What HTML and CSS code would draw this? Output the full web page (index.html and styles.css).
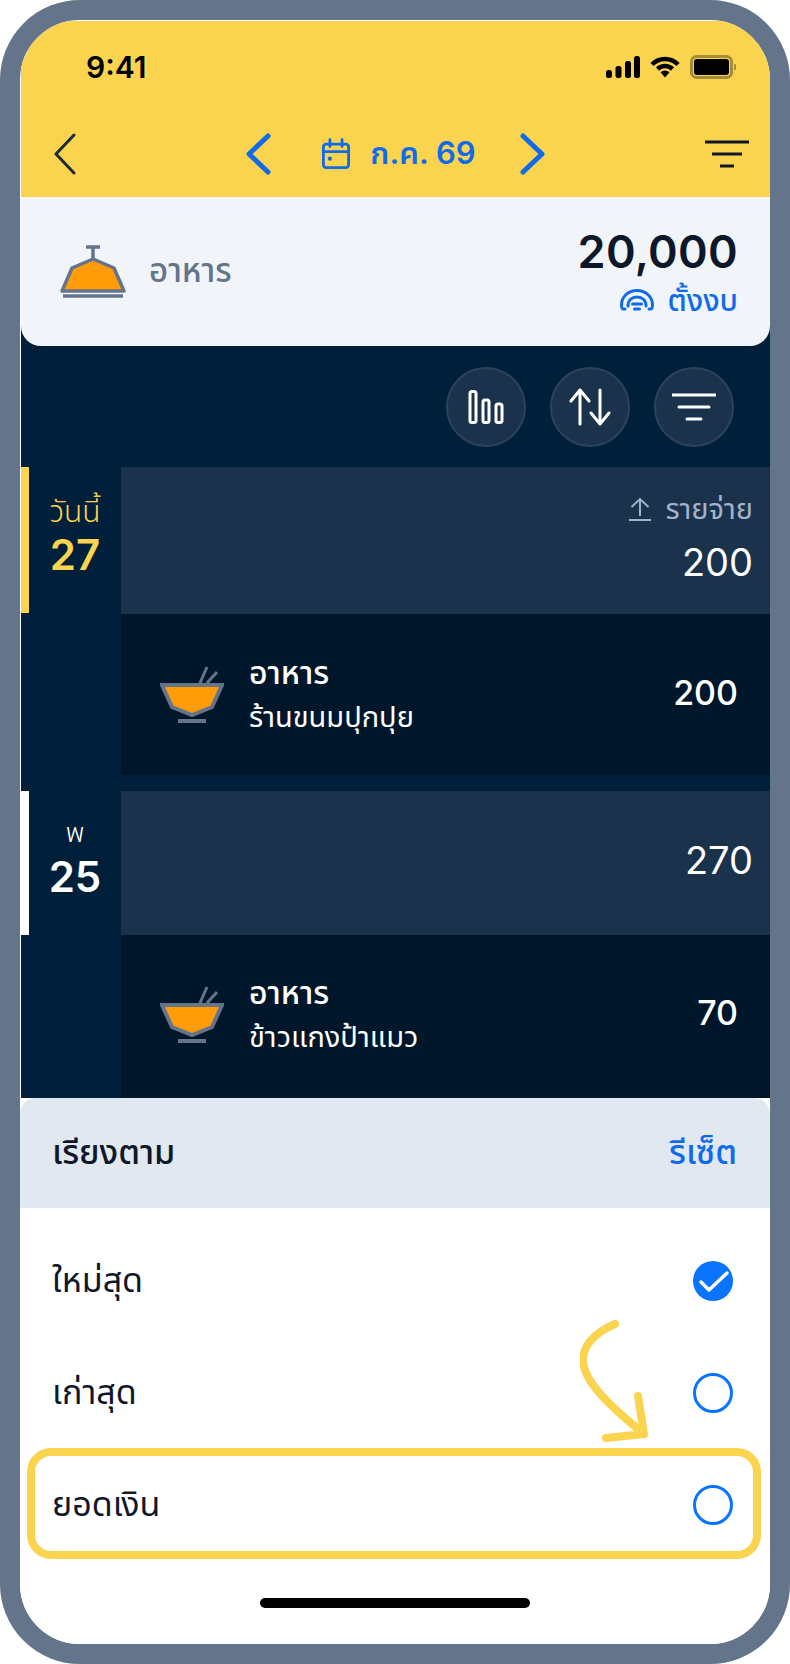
FILE: index.html
```html
<!DOCTYPE html>
<html lang="th">
<head>
    <meta charset="UTF-8">
    <meta name="viewport" content="width=device-width, initial-scale=1.0">
    <title>อาหาร - เรียงตาม</title>
    <link rel="stylesheet" href="styles.css">
</head>
<body>

    <div class="phone">
        <div class="screen">

            <div class="top">
                <div class="status">
                    <span class="time">9:41</span>
                    <div class="status-icons">
                        <svg width="34" height="22" viewBox="0 0 34 22"><rect x="0" y="14" width="6" height="8" rx="2.5"/><rect x="9.500" y="10" width="6" height="12" rx="2.500"/><rect x="19" y="5" width="6" height="17" rx="2.500"/><rect x="28" y="0" width="6" height="22" rx="2.500"/></svg>
                        <svg width="30" height="22" viewBox="0 0 30 22"><path d="M2 8.500 A18 18 0 0 1 28 8.500" class="wifi"/><path d="M7.500 13 A11 11 0 0 1 22.500 13" class="wifi"/><path d="M10.500 16.200 A6.500 6.500 0 0 1 19.500 16.200 L15 21.500 Z"/></svg>
                        <svg width="46" height="24" viewBox="0 0 46 24"><rect x="1.500" y="1.500" width="40" height="21" rx="5" class="batt-rim"/><rect x="4" y="4" width="35" height="16" rx="3"/><path d="M44 9 a3 3 0 0 1 0 6 Z" class="batt-nub"/></svg>
                    </div>
                </div>
                <div class="nav">
                    <svg class="nav-back" width="22" height="42" viewBox="0 0 22 42"><path d="M20 2 L2 21 L20 40"/></svg>
                    <div class="month">
                        <svg class="chev" width="26" height="42" viewBox="0 0 26 42"><path d="M23 3 L4 21 L23 39"/></svg>
                        <svg class="cal" width="28" height="32" viewBox="0 0 30 34"><rect x="1.500" y="6.500" width="27" height="25" rx="3"/><path d="M1.500 14.500 H28.500 M8.500 1.500 V9 M21.500 1.500 V9"/><circle cx="8.500" cy="22" r="2.200" class="cal-dot"/></svg>
                        <span class="month-label">ก.ค. 69</span>
                        <svg class="chev" width="26" height="42" viewBox="0 0 26 42"><path d="M3 3 L22 21 L3 39"/></svg>
                    </div>
                    <svg class="filter filter-dark" width="44" height="28" viewBox="0 0 44 28"><path d="M0 2 H44 M7 14 H37 M15 26 H29"/></svg>
                </div>
            </div>

            <div class="content">
                <div class="summary">
                    <div class="summary-name">
                        <svg width="66" height="54" viewBox="0 0 66 54"><path d="M26 2 H40 M33 2 V14"/><path d="M33 14 L54 23 L64 46 H2 L12 23 Z" class="fill-orange"/><path d="M3 51 H63"/></svg>
                        <span>อาหาร</span>
                    </div>
                    <div class="summary-amount">
                        <div class="budget-total">20,000</div>
                        <div class="budget-link">
                            <svg width="34" height="22" viewBox="0 0 34 22"><path d="M5 20 H3.500 Q1.500 20 1.500 16 C1.500 8 8 1.500 17 1.500 C26 1.500 32.500 8 32.500 16 Q32.500 20 30.500 20 H29"/><path d="M8 17 C8 11 12 8 17 8 C22 8 26 11 26 17"/><path d="M12.500 15 H21.500 M14.500 20 H19.500"/></svg>
                            <span>ตั้งงบ</span>
                        </div>
                    </div>
                </div>

                <div class="tools">
                    <div class="tool">
                        <svg class="bars" width="36" height="34" viewBox="0 0 36 34"><rect x="2" y="1.500" width="6" height="31" rx="2"/><rect x="15" y="10" width="6" height="22.500" rx="2"/><rect x="28" y="14" width="6" height="18.500" rx="2"/></svg>
                    </div>
                    <div class="tool">
                        <svg width="42" height="38" viewBox="0 0 42 38"><path d="M11 36 V2 M2 13 L11 2 L20 13"/><path d="M31 2 V36 M22 25 L31 36 L40 25"/></svg>
                    </div>
                    <div class="tool">
                        <svg class="filter" width="44" height="28" viewBox="0 0 44 28"><path d="M0 2 H44 M7 14 H37 M15 26 H29"/></svg>
                    </div>
                </div>

                <div class="days">
                    <div class="day">
                        <div class="date date-today">
                            <div class="date-label">วันนี้</div>
                            <div class="date-num">27</div>
                        </div>
                        <div class="day-total day-total-tall">
                            <div class="total-kind">
                                <svg width="24" height="24" viewBox="0 0 24 24"><path d="M12 19 V2 M3.500 10 L12 2 L20.500 10 M1 23 H23"/></svg>
                                <span>รายจ่าย</span>
                            </div>
                            <div class="total-num">200</div>
                        </div>
                    </div>
                    <div class="entry entry-first">
                        <svg class="bowl" width="64" height="60" viewBox="0 0 64 60"><path d="M40 18 L47 2 M47 18 L57 7" class="sticks"/><path d="M2 20 H62 L52 42 L32 50 L12 42 Z" class="fill-orange"/><path d="M18 56 H46"/></svg>
                        <div class="entry-text">
                            <div class="entry-title">อาหาร</div>
                            <div class="entry-sub">ร้านขนมปุกปุย</div>
                        </div>
                        <div class="entry-num">200</div>
                    </div>

                    <div class="day">
                        <div class="date">
                            <div class="date-label">พ</div>
                            <div class="date-num">25</div>
                        </div>
                        <div class="day-total day-total-short">
                            <div class="total-num">270</div>
                        </div>
                    </div>
                    <div class="entry entry-last">
                        <svg class="bowl" width="64" height="60" viewBox="0 0 64 60"><path d="M40 18 L47 2 M47 18 L57 7" class="sticks"/><path d="M2 20 H62 L52 42 L32 50 L12 42 Z" class="fill-orange"/><path d="M18 56 H46"/></svg>
                        <div class="entry-text">
                            <div class="entry-title">อาหาร</div>
                            <div class="entry-sub">ข้าวแกงป้าแมว</div>
                        </div>
                        <div class="entry-num">70</div>
                    </div>
                </div>
            </div>

            <div class="sheet">
                <div class="sheet-head">
                    <span class="sheet-title">เรียงตาม</span>
                    <span class="sheet-reset">รีเซ็ต</span>
                </div>
                <div class="options">
                    <div class="option">
                        <span>ใหม่สุด</span>
                        <svg width="40" height="40" viewBox="0 0 40 40"><circle cx="20" cy="20" r="20" class="radio-on"/><path d="M8 21 L16 29 L34 12" class="radio-check"/></svg>
                    </div>
                    <div class="option">
                        <span>เก่าสุด</span>
                        <svg width="40" height="40" viewBox="0 0 40 40"><circle cx="20" cy="20" r="18.500" class="radio-off"/></svg>
                    </div>
                    <div class="option">
                        <span>ยอดเงิน</span>
                        <svg width="40" height="40" viewBox="0 0 40 40"><circle cx="20" cy="20" r="18.500" class="radio-off"/></svg>
                    </div>
                </div>
                <div class="home-bar"></div>
            </div>

            <div class="highlight"></div>
            <svg class="arrow" width="72" height="126" viewBox="0 0 72 126"><path d="M35 5 C14 14 3 27 3 41 C3 64 36 92 64 115 M58 77 L64 115 L26 119"/></svg>
        </div>
    </div>

</body>
</html>
```
FILE: styles.css
```css
* { box-sizing: border-box; }
body { margin: 0; background: white; font-family: Inter, "Noto Sans", "Noto Sans Thai", sans-serif; color: #0f172a; }
svg { display: block; flex: none; }

.phone { width: 790px; height: 1664px; border: 20px solid #64748b; border-radius: 80px; overflow: hidden; background: white; }
.screen { position: relative; height: 1624px; display: flex; flex-direction: column; padding: 1px 0 0 1px; }

/* yellow top */
.top { height: 176px; background: #fad34f; }
.status { display: flex; justify-content: space-between; align-items: center; height: 70px; padding: 22px 34px 0 65px; }
.time { font-size: 30px; font-weight: 600; color: black; }
.status-icons { display: flex; align-items: center; gap: 10px; }
.wifi { fill: none; stroke: black; stroke-width: 4.500; }
.batt-rim { fill: none; stroke: #a58d33; stroke-width: 3; }
.batt-nub { fill: #a58d33; }
.nav { display: flex; justify-content: space-between; align-items: center; height: 42px; margin-top: 42px; padding: 0 21px 0 33px; }
.nav-back path { fill: none; stroke: #1e293b; stroke-width: 3; stroke-linecap: round; stroke-linejoin: round; }
.month { display: flex; align-items: center; margin-left: 10px; }
.chev path { fill: none; stroke: #0f6bec; stroke-width: 5; stroke-linecap: round; stroke-linejoin: round; }
.cal { margin-left: 51px; }
.cal rect, .cal path { fill: none; stroke: #0f6bec; stroke-width: 3; stroke-linecap: round; }
.cal-dot { fill: #0f6bec; }
.month-label { margin: 0 44px 0 20px; font-size: 31px; font-weight: 600; color: #0f6bec; }
.filter path { fill: none; stroke: white; stroke-width: 3; }
.filter-dark path { stroke: #0f172a; }

/* dark content */
.content { flex: 1; min-height: 0; overflow: hidden; background: #001f3a; }
.summary { display: flex; justify-content: space-between; align-items: center; height: 149px; padding: 0 32px 0 39px; background: #f1f5f9; border-radius: 0 0 20px 20px; }
.summary-name { display: flex; align-items: center; gap: 23px; font-size: 33px; font-weight: 500; color: #64748b; }
.summary-name svg path { fill: none; stroke: #64748b; stroke-width: 3.500; stroke-linejoin: round; }
.summary-name svg path.fill-orange, .bowl path.fill-orange { fill: #ff9c08; }
.summary-amount { text-align: right; }
.budget-total { font-size: 45px; font-weight: 600; letter-spacing: 0.3px; line-height: 52px; color: #0f172a; }
.budget-link { display: flex; justify-content: flex-end; align-items: center; gap: 14px; margin-top: 4px; font-size: 30px; line-height: 36px; font-weight: 500; color: #0f6bec; }
.budget-link svg path { fill: none; stroke: #0f6bec; stroke-width: 3; stroke-linecap: round; }

.tools { display: flex; justify-content: flex-end; gap: 24px; height: 121px; padding: 21px 36px 0 0; }
.tool { display: flex; align-items: center; justify-content: center; width: 80px; height: 80px; border: 2px solid #2c435c; border-radius: 50%; background: #1a324c; }
.tool svg rect, .tool svg path { fill: none; stroke: white; stroke-width: 3; stroke-linecap: round; stroke-linejoin: round; }

.day { display: flex; }
.date { width: 100px; height: 144px; padding-top: 24px; border-left: 8px solid white; color: white; text-align: center; }
.date-today { height: 146px; padding-top: 26px; border-left-color: #fad34f; color: #fad34f; }
.date-label { font-size: 27px; line-height: 36px; font-weight: 300; }
.date-today .date-label { font-size: 30px; }
.date-num { font-size: 42px; line-height: 52px; font-weight: 600; }
.day-total { flex: 1; display: flex; flex-direction: column; justify-content: center; align-items: flex-end; padding-right: 17px; background: #1a324c; color: white; }
.day-total-tall { height: 147px; justify-content: flex-start; padding-top: 24px; }
.day-total-short { height: 144px; padding-bottom: 6px; }
.total-kind { display: flex; align-items: center; gap: 13px; font-size: 29px; line-height: 36px; color: #a3b3c9; }
.total-kind svg path { fill: none; stroke: #a3b3c9; stroke-width: 2; }
.total-num { margin-top: 13px; font-size: 38px; line-height: 44px; font-weight: 400; }
.day-total-short .total-num { margin-top: 0; }

.entry { display: flex; align-items: center; height: 163px; margin-left: 100px; padding: 0 32px 0 39px; background: #00162b; color: white; }
.entry-first { height: 161px; margin-bottom: 16px; }
.entry-last { padding-bottom: 4px; }
.bowl { margin-right: 25px; }
.bowl path { fill: none; stroke: #64748b; stroke-width: 4; }
.bowl path.sticks { stroke-width: 3; }
.entry-text { flex: 1; }
.entry-title { font-size: 32px; line-height: 40px; font-weight: 500; }
.entry-sub { margin-top: 4px; font-size: 29px; line-height: 40px; }
.entry-num { margin-bottom: 4px; font-size: 34px; font-weight: 500; }

/* sort sheet */
.sheet { height: 546px; margin-left: -1px; background: white; flex: none; }
.sheet-head { display: flex; justify-content: space-between; align-items: center; height: 110px; padding: 0 33px 0 32px; background: #e2e8f0; border-radius: 16px 16px 0 0; font-size: 34px; font-weight: 500; }
.sheet-reset { color: #0f6bec; }
.options { padding-top: 17px; }
.option { display: flex; justify-content: space-between; align-items: center; height: 112px; padding: 0 37px 0 32px; font-size: 34px; }
.radio-on { fill: #0b74ff; }
.radio-check { fill: none; stroke: white; stroke-width: 3.500; stroke-linecap: round; stroke-linejoin: round; }
.radio-off { fill: none; stroke: #0b74ff; stroke-width: 3; }
.home-bar { width: 270px; height: 10px; margin: 37px auto 0; border-radius: 5px; background: black; }

/* annotation drawn on top of the screen */
.highlight { position: absolute; left: 7px; top: 1428px; width: 734px; height: 111px; border: 8px solid #fad34f; border-radius: 24px; }
.arrow { position: absolute; left: 560px; top: 1299px; }
.arrow path { fill: none; stroke: #fad34f; stroke-width: 8; stroke-linecap: round; stroke-linejoin: round; }
```
